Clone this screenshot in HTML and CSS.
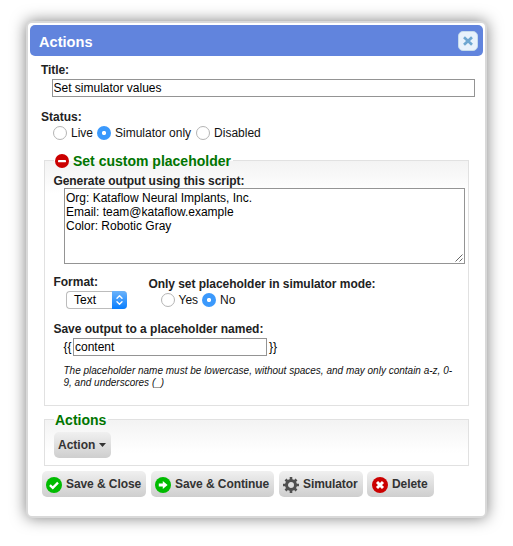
FILE: index.html
```html
<!DOCTYPE html>
<html lang="en">
<head>
<meta charset="utf-8">
<title>Actions</title>
<link rel="stylesheet" href="styles.css">
</head>
<body>
<main class="dialog">
  <header class="titlebar">
    <h1>Actions</h1>
    <button class="close" aria-label="Close"><svg width="10" height="10" viewBox="0 0 10 10"><path d="M2 2.2 8 7.8M8 2.2 2 7.8" stroke="#6ea7d1" stroke-width="2.7" stroke-linecap="square"/></svg></button>
  </header>
  <form class="content">
    <label class="label title-label" for="title">Title:</label>
    <input class="field title-field" id="title" value="Set simulator values">
    <div class="label status-label">Status:</div>
    <div class="options">
      <label class="opt live"><input type="radio" name="status"><span>Live</span></label>
      <label class="opt sim"><input type="radio" name="status" checked><span>Simulator only</span></label>
      <label class="opt"><input type="radio" name="status"><span>Disabled</span></label>
    </div>
    <fieldset class="placeholder">
      <legend><svg class="minus" width="14" height="14" viewBox="0 0 14 14"><circle cx="7" cy="7" r="7" fill="#cb0000"/><rect x="3" y="6" width="8" height="2.2" rx=".4" fill="#fff"/></svg><span class="legend-text">Set custom placeholder</span></legend>
      <label class="label script-label" for="script">Generate output using this script:</label>
      <div class="script-box">
        <textarea id="script">Org: Kataflow Neural Implants, Inc.
Email: team@kataflow.example
Color: Robotic Gray</textarea>
        <svg class="grip" width="8" height="8" viewBox="0 0 8 8"><path d="M.5 7.5l7-7M4.5 7.5l3-3" stroke="#555" stroke-width=".9"/></svg>
      </div>
      <div class="pair">
        <div class="format">
          <div class="label">Format:</div>
          <div class="select"><span>Text</span><i><svg width="15" height="18" viewBox="0 0 15 18"><path d="M5 7.3 7.5 4.8 10 7.3M5 10.7l2.5 2.5 2.5-2.5" fill="none" stroke="#fff" stroke-width="1.4" stroke-linecap="round" stroke-linejoin="round"/></svg></i></div>
        </div>
        <div class="mode">
          <div class="label">Only set placeholder in simulator mode:</div>
          <div class="options">
            <label class="opt yes"><input type="radio" name="mode"><span>Yes</span></label>
            <label class="opt"><input type="radio" name="mode" checked><span>No</span></label>
          </div>
        </div>
      </div>
      <label class="label name-label" for="name">Save output to a placeholder named:</label>
      <div class="name-row"><span>{{</span><input class="field name-field" id="name" value="content"><span>}}</span></div>
      <p class="note">The placeholder name must be lowercase, without spaces, and may only contain a-z, 0-<br>9, and underscores (_)</p>
    </fieldset>
    <fieldset class="actions">
      <legend>Actions</legend>
      <button type="button" class="btn menu">Action<svg width="7" height="4" viewBox="0 0 7 4"><path d="M0 0h7L3.5 4z" fill="#333"/></svg></button>
    </fieldset>
    <div class="buttons">
      <button type="button" class="btn b1"><svg width="16" height="16" viewBox="0 0 16 16"><circle cx="8" cy="8" r="8" fill="#0b0"/><path d="M3.9 8.1l2.9 2.7 5.2-5.2" fill="none" stroke="#fff" stroke-width="2.3"/></svg>Save &amp; Close</button>
      <button type="button" class="btn b2"><svg width="16" height="16" viewBox="0 0 16 16"><circle cx="8" cy="8" r="8" fill="#0b0"/><path d="M3.8 6.6h4V4L12.6 8 7.8 12V9.4h-4z" fill="#fff"/></svg>Save &amp; Continue</button>
      <button type="button" class="btn b3"><svg width="16" height="16" viewBox="0 0 16 16" fill="none" stroke="#505050"><circle cx="8" cy="8" r="4.5" stroke-width="3"/><path d="M8 0v3M8 13v3M0 8h3M13 8h3M2.5 2.5l2 2M11.5 11.5l2 2M2.5 13.5l2-2M11.5 4.5l2-2" stroke-width="2.6"/></svg>Simulator</button>
      <button type="button" class="btn b4"><svg width="16" height="16" viewBox="0 0 16 16"><circle cx="8" cy="8" r="8" fill="#cb0000"/><path d="M5 5l6 6M11 5l-6 6" stroke="#fff" stroke-width="3"/></svg>Delete</button>
    </div>
  </form>
</main>
</body>
</html>
```
FILE: styles.css
```css
* { box-sizing: border-box; }
body {
  min-height: 546px;
  margin: 0;
  padding: 21px 0 0 26px;
  background: #fff;
  color: #000;
  font: 12px/14px "Liberation Sans", Arial, sans-serif;
}
button, input, textarea { font: inherit; color: inherit; }
svg { display: block; flex: none; }

.dialog {
  width: 461px;
  height: 497px;
  padding: 2px;
  border: 2px solid #d9d9d9;
  border-radius: 6px;
  background: #fff;
  box-shadow: 0 0 15px rgba(0, 0, 0, .5);
}
.titlebar {
  display: flex;
  align-items: center;
  justify-content: space-between;
  height: 31px;
  padding: 1px 5px 0 9px;
  border-radius: 5px;
  background: #6184dd;
}
.titlebar h1 {
  margin: 1px 0 0;
  color: #fff;
  font-size: 14.6px;
  line-height: 18px;
}
.close {
  display: grid;
  place-items: center;
  width: 20px;
  height: 20px;
  padding: 0;
  border: 1px solid #c5dbec;
  border-radius: 5px;
  background: #e8f2fc;
}

.content { padding: 7px 14px 0 11px; }
.label {
  display: block;
  color: #222;
  font-weight: bold;
  white-space: nowrap;
}
.title-label { letter-spacing: -.1px; }
.field {
  display: block;
  height: 18px;
  padding: 0 1px;
  border: 1px solid #949494;
  border-radius: 0;
  background: #fff;
  outline: 0;
}
.title-field { width: 423px; margin: 2px 0 0 11px; padding-left: .5px; }
.status-label { margin-top: 13px; }
.options { display: flex; margin: 2px 0 0 12px; height: 14px; }
.opt { display: flex; align-items: center; color: #111; white-space: nowrap; }
.opt input {
  appearance: none;
  width: 14px;
  height: 14px;
  margin: 0 4px 0 0;
  border: 1px solid #b4b4b4;
  border-radius: 50%;
  background: #fff;
}
.opt input:checked {
  border: 0;
  background: radial-gradient(circle, #fff 1.7px, #3b99fc 2.5px);
}
.live { margin-right: 4px; }
.sim { margin-right: 5px; }
.yes { margin-right: 4px; }

fieldset {
  min-width: 0;
  margin: 0;
  border: 1px solid #e1e1e1;
  background: linear-gradient(#f3f3f3, #fff) 0 0 / 100% 33px no-repeat;
}
legend {
  display: flex;
  align-items: center;
  height: 17px;
  padding: 0 2px 0 1px;
  color: #007500;
  font-size: 14px;
  font-weight: bold;
  line-height: 17px;
}
.legend-text { margin: 2px 0 0 4px; }
.placeholder {
  width: 425px;
  height: 254px;
  margin: 12px 0 0 3px;
  padding: 5px 3px 0 9px;
}
.placeholder legend { padding-left: 1px; }
.placeholder .label { margin-left: -.6px; }
.script-label { letter-spacing: -.05px; }
.mode .label { letter-spacing: -.04px; }
.script-box { position: relative; width: 401px; height: 76px; margin-left: 10px; }
.script-box textarea {
  display: block;
  width: 100%;
  height: 100%;
  padding: 2px 2px 2px 1px;
  border: 1px solid #949494;
  background: #fff;
  resize: none;
  outline: 0;
}
.grip { position: absolute; right: 2px; bottom: 2px; }
.pair { display: flex; margin-top: 11px; height: 47px; }
.format { width: 95px; }
.mode { padding-top: 2px; }
.mode .options { margin-left: 11.5px; }
.select {
  display: flex;
  align-items: center;
  justify-content: space-between;
  width: 61px;
  height: 18px;
  margin: 2px 0 0 12px;
  padding-left: 7px;
  border: 1px solid #bcbcbc;
  border-right: 0;
  border-radius: 4px;
}
.select i {
  width: 15px;
  height: 18px;
  border-radius: 0 4px 4px 0;
  background: linear-gradient(#6cb3fa, #087eff);
}
.name-row { display: flex; align-items: center; margin: 2px 0 0 9.5px; }
.name-field { width: 194px; margin: 0 2px 0 1.5px; }
.note {
  margin: 9px 0 0 9.5px;
  color: #111;
  font-size: 10px;
  font-style: italic;
  line-height: 12px;
  white-space: nowrap;
}
.actions {
  width: 425px;
  height: 55px;
  margin: 5px 0 0 3px;
  padding: 4px 9px 0;
}
.actions legend { padding-top: 1px; }
.btn {
  display: flex;
  align-items: center;
  height: 26px;
  padding: 0 0 0 4px;
  border: 0;
  border-radius: 5px;
  background: linear-gradient(#f0f0f0, #cecece);
  color: #333;
  font-weight: bold;
  white-space: nowrap;
}
.menu { width: 57px; gap: 4px; }
.buttons { display: flex; margin: 5px 0 0 1px; }
.buttons .btn { gap: 4px; letter-spacing: -.08px; }
.buttons svg { margin-top: 2px; }
.b1 { width: 104px; margin-right: 5px; }
.b2 { width: 123px; margin-right: 5px; }
.b3 { width: 84px; margin-right: 4px; }
.b4 { width: 67px; }
.buttons .b4 { padding-left: 5px; }
```
